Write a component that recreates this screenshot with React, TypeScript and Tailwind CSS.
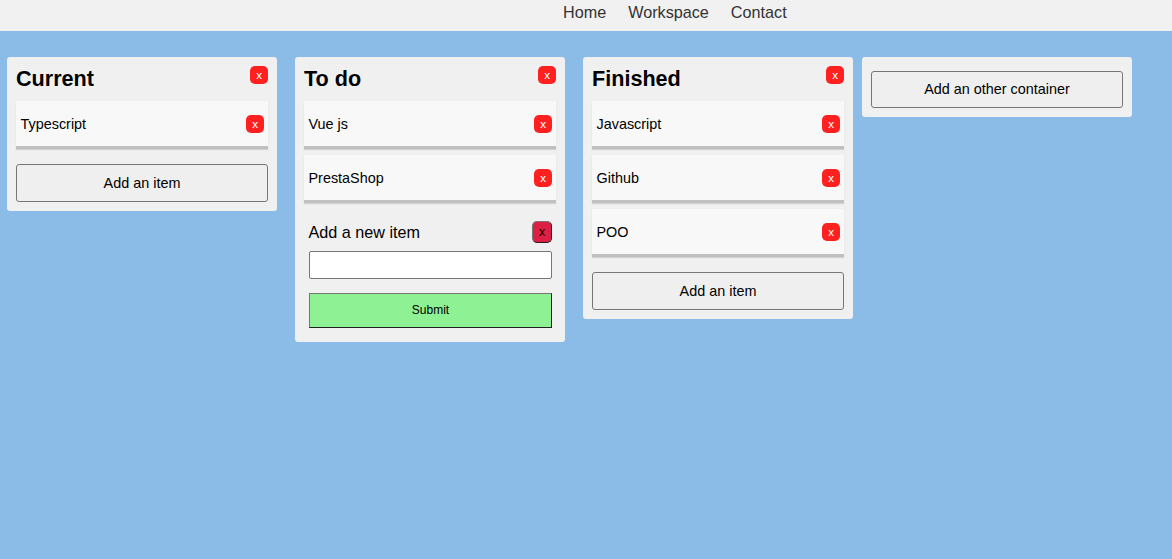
import type { ReactNode } from "react";

const navLinks = ["Home", "Workspace", "Contact"];

function CloseButton() {
  return (
    <button className="h-[18px] w-[18px] shrink-0 rounded-[5px] bg-[#ff2020] text-center text-[11.5px] leading-[18px] text-white">
      x
    </button>
  );
}

function Panel({ children }: { children: ReactNode }) {
  return <section className="w-[270px] shrink-0 rounded-[3px] bg-[#f0f0f0] p-[9px]">{children}</section>;
}

function Item({ label }: { label: string }) {
  return (
    <li className="flex h-12 items-center justify-between border-b-[3px] border-[#c0c0c0] bg-[#f8f8f8] pr-1 pl-[5px] shadow-[0_1px_1px_rgba(0,0,0,0.12)]">
      <span className="-ml-px pl-[0.5px] text-[14.4px] leading-5">{label}</span>
      <CloseButton />
    </li>
  );
}

function Column({ title, items, children }: { title: string; items: string[]; children: ReactNode }) {
  return (
    <Panel>
      <header className="flex h-[35px] items-start justify-between">
        <h2 className="text-[21.6px] leading-[25px] font-bold">{title}</h2>
        <CloseButton />
      </header>
      <ul className="flex flex-col gap-1.5">
        {items.map((item) => (
          <Item key={item} label={item} />
        ))}
      </ul>
      {children}
    </Panel>
  );
}

function AddItemButton() {
  return (
    <button className="mt-[15px] block h-[38px] w-full rounded-[3px] border border-[#767676] bg-[#efefef] pt-px text-[14.4px]">
      Add an item
    </button>
  );
}

function NewItemForm() {
  return (
    <form className="mt-[18px] mb-[5px] pr-1 pl-[5px]">
      <div className="flex h-[22px] items-center justify-between">
        <label htmlFor="new-item" className="-ml-[0.5px] text-[16.2px] leading-[22px]">
          Add a new item
        </label>
        <button
          type="button"
          className="h-[22px] w-5 rounded-[5px] border border-t-[#767676] border-r-[#212121] border-b-[#212121] border-l-[#767676] bg-[#dc1f43] text-[12px] leading-5"
        >
          x
        </button>
      </div>
      <input
        id="new-item"
        className="mt-2 block h-7 w-full rounded-[2px] border border-[#767676] bg-white px-1 text-sm"
      />
      <button
        type="button"
        className="mt-3.5 block h-[35px] w-full border border-t-[#767676] border-r-[#212121] border-b-[#212121] border-l-[#767676] bg-[#8ef294] pb-0.5 text-xs"
      >
        Submit
      </button>
    </form>
  );
}

export default function App() {
  return (
    <div className="min-h-screen bg-[#8abce7] font-['Liberation_Sans',Arial,sans-serif] text-black">
      <nav className="flex h-[31px] gap-[22px] bg-[#f1f1f1] pl-[563px] text-[16.2px] leading-6 text-[#333]">
        {navLinks.map((link) => (
          <a key={link} href="#">
            {link}
          </a>
        ))}
      </nav>
      <main className="flex items-start pt-[26px] pl-[7px]">
        <div className="flex items-start gap-[18px]">
          <Column title="Current" items={["Typescript"]}>
            <AddItemButton />
          </Column>
          <Column title="To do" items={["Vue js", "PrestaShop"]}>
            <NewItemForm />
          </Column>
          <Column title="Finished" items={["Javascript", "Github", "POO"]}>
            <AddItemButton />
          </Column>
        </div>
        <div className="ml-[9px]">
          <Panel>
            <button className="mt-[5px] block h-[37px] w-full rounded-[3px] border border-[#767676] bg-[#efefef] text-[14.4px]">
              Add an other container
            </button>
          </Panel>
        </div>
      </main>
    </div>
  );
}
